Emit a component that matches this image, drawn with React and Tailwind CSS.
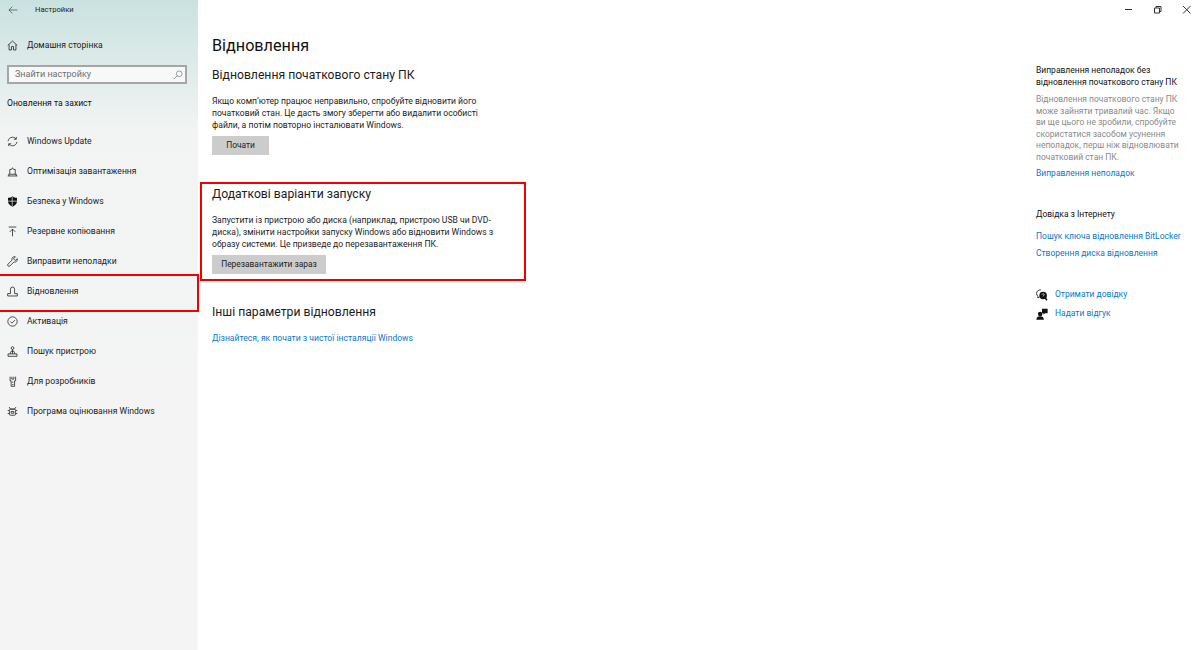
import React from "react";

const I = ({ children, className = "" }) => (
  <svg viewBox="0 0 16 16" fill="none" stroke="#1a1a1a" strokeWidth="1.100" className={`w-[11px] h-[11px] shrink-0 ${className}`}>
    {children}
  </svg>
);

const icons = {
  update: (
    <I><path d="M1.500 7.500C1.900 4.200 4.700 1.800 8 1.800c2.200 0 4 1 5.200 2.700M14.500 8.500c-.4 3.300-3.200 5.700-6.500 5.700-2.200 0-4-1-5.200-2.700" /><path d="M13.500 1.300v3.400H10M2.500 14.700v-3.400H6" /></I>
  ),
  delivery: (
    <I><path d="M1 14.500h14M2.500 14.500v-2.500h11v2.500M4 12V5h2.500L8 2.500 9.500 5H12v7" /></I>
  ),
  shield: (
    <svg viewBox="0 0 16 16" className="w-[11px] h-[11px] shrink-0">
      <path d="M8 .5c2 1.600 4 2.200 6.500 2.200V8c0 3.600-3 6-6.500 7.500C4.500 14 1.500 11.600 1.500 8V2.700C4 2.700 6 2.100 8 .5z" fill="#111" />
      <path d="M7.600 1v14M1.500 7.500h13" stroke="#f3f3f3" strokeWidth="1" />
    </svg>
  ),
  backup: (
    <I><path d="M2.500 1.500h11M8 15V4.500M4 8.500l4-4 4 4" /></I>
  ),
  wrench: (
    <I><path d="M14.800 3.800 12 6.500 9.500 4l2.700-2.800A3.800 3.800 0 0 0 7.300 6L1.500 11.800a1.900 1.900 0 0 0 2.700 2.700L10 8.700a3.800 3.800 0 0 0 4.800-4.900z" /></I>
  ),
  recovery: (
    <I><path d="M1 14.500h14v-3.500h-4V4.500a3 3 0 0 0-6 0V11H1z" /></I>
  ),
  activation: (
    <I><circle cx="8" cy="8" r="6.800" /><path d="m5 8.200 2.200 2.200L11.500 6" /></I>
  ),
  find: (
    <I><path d="M1.500 15h13v-3.500H1.500zM4.500 11.500 6 7.500h4l1.500 4" /><circle cx="8" cy="3" r="2" /><path d="M8 5v6.500" /></I>
  ),
  dev: (
    <I><path d="M4.500 1v6H6v8h5V7h1.500V1M7 1v3.500h3V1" /><path d="M8.500 8v2" /><path d="M7.500 12.500h2" /></I>
  ),
  insider: (
    <I><path d="M3 1.500l2 3h6l2-3" /><rect x="3.500" y="4.500" width="9" height="9" rx="2" /><path d="M1 6.500h2.500M12.500 6.500H15M1 11h2.500M12.500 11H15M6 8h4v2.500H6z" /></I>
  ),
};

const navItems = [
  ["update", "Windows Update"],
  ["delivery", "Оптимізація завантаження"],
  ["shield", "Безпека у Windows"],
  ["backup", "Резервне копіювання"],
  ["wrench", "Виправити неполадки"],
  ["recovery", "Відновлення"],
  ["activation", "Активація"],
  ["find", "Пошук пристрою"],
  ["dev", "Для розробників"],
  ["insider", "Програма оцінювання Windows"],
];

const Link = ({ children, className = "" }) => (
  <div className={`text-[#0a78c8] ${className}`}>{children}</div>
);

export default function App() {
  return (
    <div
      className="flex h-[650px] w-[1200px] overflow-hidden bg-white text-[#1c1c1c] text-[8.6px]"
      style={{ fontFamily: 'Roboto, sans-serif' }}
    >
      <aside className="flex w-[198px] shrink-0 flex-col bg-gradient-to-b from-[#c9e2e0] via-[#f2f4f3] via-[20%] to-[#f4f4f4]">
        <div className="flex h-[20px] items-center pl-[8px]">
          <svg viewBox="0 0 16 16" fill="none" stroke="#333" strokeWidth="1" className="h-[10px] w-[10px]">
            <path d="M15 8H1.500M7 2.500 1.500 8 7 13.500" />
          </svg>
          <span className="ml-[17px] text-[7.6px] leading-none">Настройки</span>
        </div>
        <div className="mt-[15px] flex h-[20px] items-center pl-[7px]">
          <svg viewBox="0 0 16 16" fill="none" stroke="#1a1a1a" strokeWidth="1.100" className="h-[11px] w-[11px]">
            <path d="M1 8 8 1.500 15 8M3 6.500v8h3.500V9.500h3v5H13v-8" />
          </svg>
          <span className="ml-[9px]">Домашня сторінка</span>
        </div>
        <div className="ml-[7px] mt-[10px] flex h-[19px] w-[180px] items-center justify-between border-2 border-[#a6a6a6] bg-[#f7f8f8] pl-[6px] pr-[2px] text-[9px] text-[#707070]">
          <span>Знайти настройку</span>
          <svg viewBox="0 0 16 16" fill="none" stroke="#666" strokeWidth="1" className="h-[10px] w-[10px]">
            <circle cx="10" cy="6" r="4.500" /><path d="M6.800 9.200 1.500 14.500" />
          </svg>
        </div>
        <div className="ml-[7px] mt-[12px] h-[14px] leading-[14px] text-[#111]">Оновлення та захист</div>
        <nav className="mt-[16px] flex flex-col">
          {navItems.map(([icon, label]) => {
            const active = label === "Відновлення";
            return (
              <div
                key={label}
                className={
                  active
                    ? "-ml-[2px] -mt-[2px] -mb-[6px] z-10 flex h-[38px] w-[201px] items-center border-2 border-[#f00000] pb-[4px] pl-[7px]"
                    : "flex h-[30px] items-center pl-[7px]"
                }
              >
                {icons[icon]}
                <span className="ml-[9px]">{label}</span>
              </div>
            );
          })}
        </nav>
      </aside>

      <main className="flex min-w-0 flex-1 flex-col pl-[2px] pt-[35px]">
        <div className="ml-[12px] text-[16.200px] leading-[22px] text-[#111]">Відновлення</div>
        <section className="ml-[12px] mt-[10px] w-[288px]">
          <h2 className="text-[12.200px] leading-[16px]">Відновлення початкового стану ПК</h2>
          <p className="mt-[12px] leading-[12px]">
            Якщо комп’ютер працює неправильно, спробуйте відновити його початковий стан. Це дасть змогу зберегти або видалити особисті файли, а потім повторно інсталювати Windows.
          </p>
          <div className="mt-[5px] flex h-[19px] w-[57px] items-center justify-center bg-[#cccccc] text-[8.400px]">Почати</div>
        </section>
        <section className="mt-[27px] h-[99px] w-[326px] border-2 border-[#f00000] pl-[10px] pr-[24px]">
          <h2 className="mt-[2px] text-[12.200px] leading-[16px]">Додаткові варіанти запуску</h2>
          <p className="mt-[12px] leading-[12px]">
            Запустити із пристрою або диска (наприклад, пристрою USB чи DVD-диска), змінити настройки запуску Windows або відновити Windows з образу системи. Це призведе до перезавантаження ПК.
          </p>
          <div className="mt-[5px] flex h-[19px] w-[114px] items-center justify-center bg-[#cccccc] text-[8.400px]">Перезавантажити зараз</div>
        </section>
        <section className="ml-[12px] mt-[23px]">
          <h2 className="text-[12.200px] leading-[16px]">Інші параметри відновлення</h2>
          <Link className="mt-[12px] leading-[12px]">Дізнайтеся, як почати з чистої інсталяції Windows</Link>
        </section>
      </main>

      <aside className="flex w-[164px] shrink-0 flex-col">
        <div className="flex h-[16px] items-center">
          <svg viewBox="0 0 164 16" fill="none" stroke="#333" strokeWidth="1" className="h-[16px] w-[164px]">
            <path d="M89 9.500h7M118.500 8h5v5h-5zM120 8V6.500h5v5h-1.500M147 6l7.500 7.500M154.500 6 147 13.500" />
          </svg>
        </div>
        <div className="mt-[49px] w-[148px] text-[8.500px] leading-[11.500px] text-[#111]">
          Виправлення неполадок без відновлення початкового стану ПК
        </div>
        <p className="mt-[6px] w-[148px] text-[8.500px] leading-[11.600px] text-[#8a8a8a]">
          Відновлення початкового стану ПК може зайняти тривалий час. Якщо ви ще цього не зробили, спробуйте скористатися засобом усунення неполадок, перш ніж відновлювати початковий стан ПК.
        </p>
        <Link className="mt-[3px] text-[8.500px] leading-[12px]">Виправлення неполадок</Link>
        <div className="mt-[29px] text-[8.500px] leading-[12px] text-[#111]">Довідка з Інтернету</div>
        <Link className="mt-[10px] whitespace-nowrap text-[8.500px] leading-[12px]">Пошук ключа відновлення BitLocker</Link>
        <Link className="mt-[5px] text-[8.500px] leading-[12px]">Створення диска відновлення</Link>
        <div className="mt-[30px] flex h-[12px] items-center">
          <svg viewBox="0 0 16 16" className="h-[12px] w-[12px] shrink-0">
            <path d="M6.500 1C3 1 .8 3.200.8 6c0 1.500.6 2.700 1.700 3.600V12l2.300-1.500" fill="none" stroke="#111" strokeWidth="1.100" />
            <circle cx="9.500" cy="8.500" r="5" fill="#111" />
            <path d="m12.500 12 2 3" stroke="#111" strokeWidth="2" />
            <path d="M8 7.300c.3-1.200 3-1.200 3 .3 0 1-1.500 1-1.500 2.200" fill="none" stroke="#fff" strokeWidth="1" />
          </svg>
          <Link className="ml-[7px] text-[8.500px]">Отримати довідку</Link>
        </div>
        <div className="mt-[7px] flex h-[12px] items-center">
          <svg viewBox="0 0 16 16" className="h-[12px] w-[12px] shrink-0" fill="#111">
            <circle cx="5.500" cy="8" r="3" />
            <path d="M.500 15.500c0-3 2-4.500 5-4.500s5 1.500 5 4.500z" />
            <path d="M8 1h7.500v6H12l-2 2V7H8z" />
          </svg>
          <Link className="ml-[7px] text-[8.500px]">Надати відгук</Link>
        </div>
      </aside>
    </div>
  );
}
